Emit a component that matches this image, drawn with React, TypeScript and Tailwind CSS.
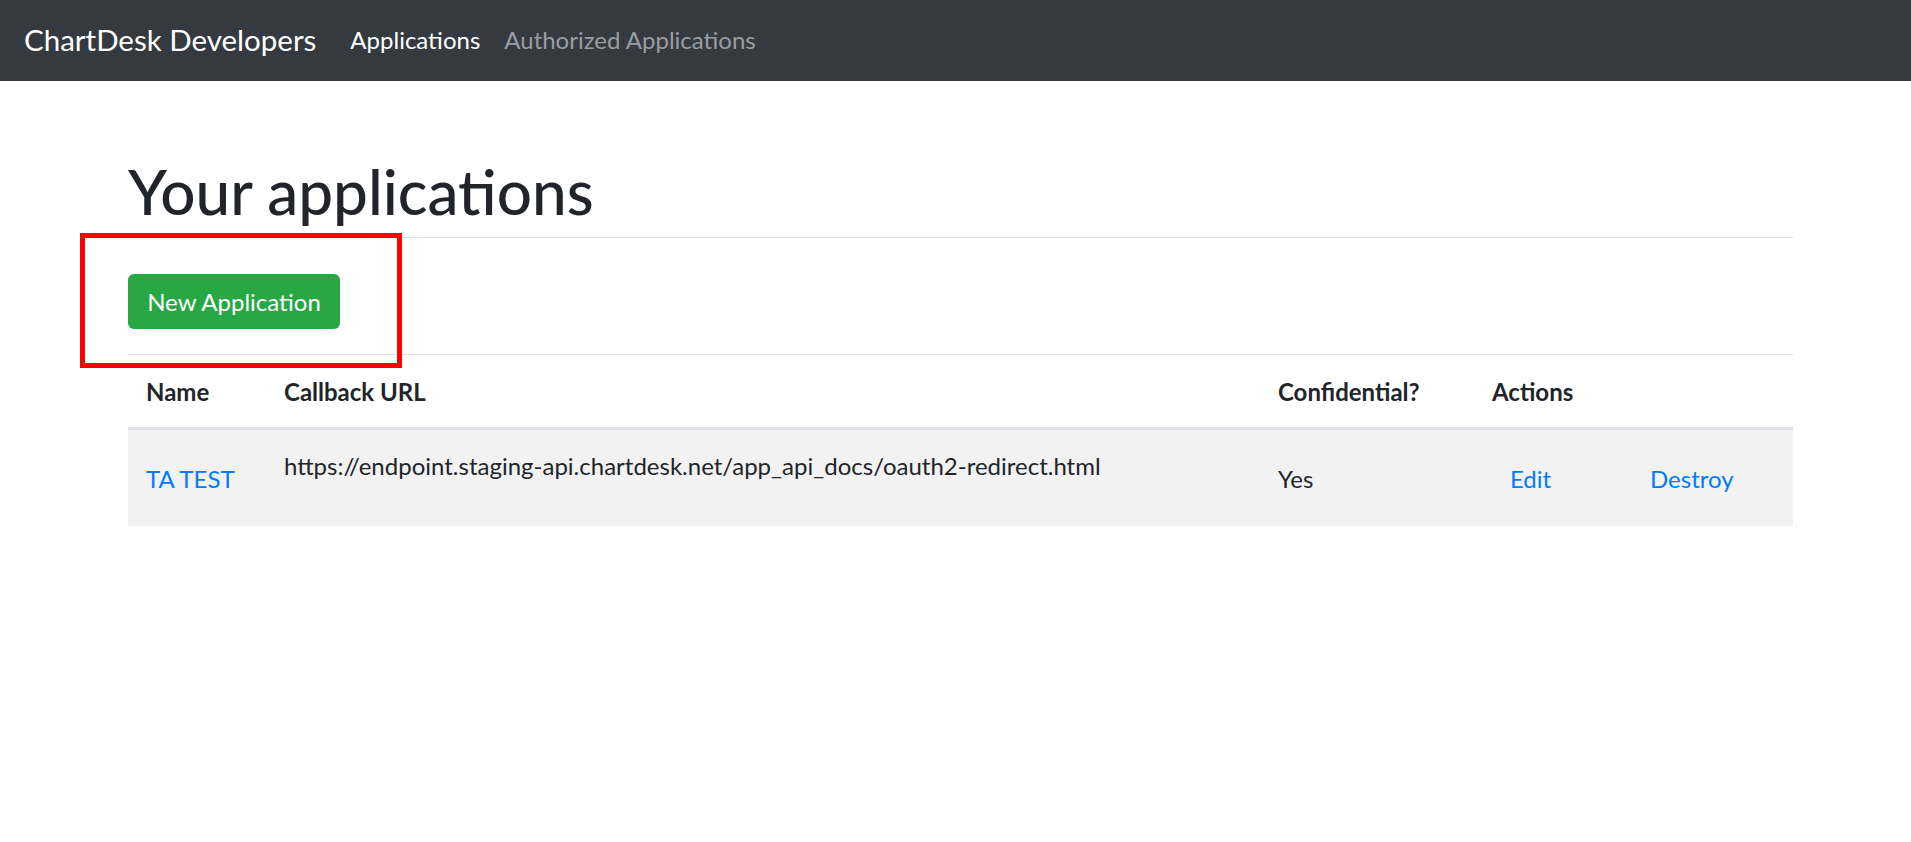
import React from "react";

export default function App() {
  return (
    <div className="relative min-h-[842px] bg-white font-[Lato,sans-serif] text-[#212529]">
      <nav className="flex h-[81px] items-center bg-[#343a40] px-[24px] pb-[2px]">
        <span className="mr-[22px] text-[29.5px] leading-[45px] text-white">ChartDesk Developers</span>
        <a className="px-[12px] text-[24px] leading-[36px] text-white">Applications</a>
        <a className="px-[12px] text-[24px] leading-[36px] text-[#9a9da0]">Authorized Applications</a>
      </nav>

      <main className="ml-[128px] w-[1665px]">
        <h1 className="mt-[74px] border-b border-[#e3e3e3] pb-[10px] text-[62px] font-medium leading-[72px]">
          Your applications
        </h1>

        <div className="mt-[36px]">
          <button className="flex h-[55px] w-[212px] items-center justify-center rounded-[6px] bg-[#28a745] text-[24px] leading-[36px] text-white">
            New Application
          </button>
        </div>

        <div className="mt-[25px] border-t border-[#dee2e6]">
          <div className="grid grid-cols-[138px_994px_214px_140px_179px] border-b-[3px] border-[#dee2e6] text-[24px] font-bold leading-[36px]">
            <div className="px-[18px] pb-[17px] pt-[19px]">Name</div>
            <div className="px-[18px] pb-[17px] pt-[19px]">Callback URL</div>
            <div className="px-[18px] pb-[17px] pt-[19px]">Confidential?</div>
            <div className="col-span-2 px-[18px] pb-[17px] pt-[19px]">Actions</div>
          </div>
          <div className="grid h-[96px] grid-cols-[138px_994px_214px_140px_179px] bg-[#f2f2f2] text-[24px] leading-[36px]">
            <div className="flex items-center px-[18px] pt-[2px]">
              <a className="text-[#007bff]">TA TEST</a>
            </div>
            <div className="px-[18px] pt-[18px]">
              https://endpoint.staging-api.chartdesk.net/app_api_docs/oauth2-redirect.html
            </div>
            <div className="flex items-center px-[18px] pt-[2px]">Yes</div>
            <div className="flex items-center px-[18px] pt-[2px]">
              <a className="px-[18px] text-[#007bff]">Edit</a>
            </div>
            <div className="flex items-center px-[18px] pt-[2px]">
              <a className="px-[18px] text-[#007bff]">Destroy</a>
            </div>
          </div>
        </div>
      </main>

      <div className="pointer-events-none absolute left-[80px] top-[233px] h-[135px] w-[322px] border-[5px] border-[#ff0000]" />
    </div>
  );
}
